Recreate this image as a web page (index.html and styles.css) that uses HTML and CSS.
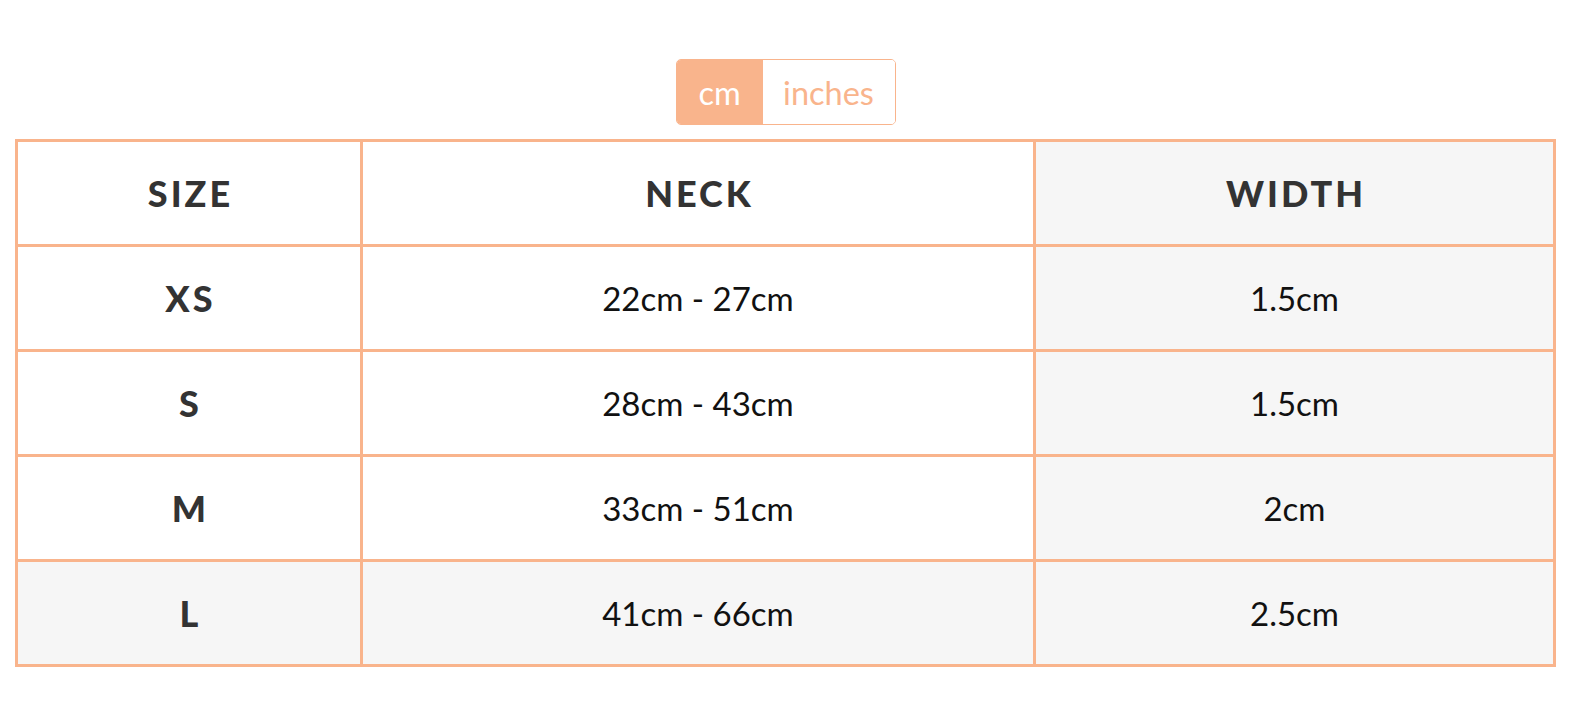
FILE: index.html
```html
<!DOCTYPE html>
<html lang="en">
<head>
<meta charset="utf-8">
<title>Size chart</title>
<link rel="stylesheet" href="styles.css">
</head>
<body>
<div class="page">
  <div class="toggle">
    <span class="seg seg-active">cm</span>
    <span class="seg">inches</span>
  </div>
  <div class="chart" role="table">
    <div class="cell head" role="columnheader">SIZE</div>
    <div class="cell head" role="columnheader">NECK</div>
    <div class="cell head shade" role="columnheader">WIDTH</div>

    <div class="cell size" role="cell">XS</div>
    <div class="cell" role="cell">22cm - 27cm</div>
    <div class="cell shade" role="cell">1.5cm</div>

    <div class="cell size" role="cell">S</div>
    <div class="cell" role="cell">28cm - 43cm</div>
    <div class="cell shade" role="cell">1.5cm</div>

    <div class="cell size" role="cell">M</div>
    <div class="cell" role="cell">33cm - 51cm</div>
    <div class="cell shade" role="cell">2cm</div>

    <div class="cell size shade" role="cell">L</div>
    <div class="cell shade" role="cell">41cm - 66cm</div>
    <div class="cell shade" role="cell">2.5cm</div>
  </div>
</div>
</body>
</html>
```

FILE: styles.css
```css
html, body {
  margin: 0;
  padding: 0;
  background: #ffffff;
}

body {
  font-family: Lato, "Open Sans", sans-serif;
  color: #111111;
}

.page {
  width: 1541px;
  padding: 59px 0 0 15px;
  display: flex;
  flex-direction: column;
  align-items: center;
}

.toggle {
  display: flex;
  height: 66px;
  box-sizing: border-box;
  border: 1.5px solid #f9b48c;
  border-radius: 5px;
  overflow: hidden;
  margin-bottom: 14px;
}

.seg {
  display: flex;
  align-items: center;
  justify-content: center;
  width: 132px;
  font-size: 32.5px;
  color: #f9b48c;
  background: #ffffff;
}

.seg-active {
  width: 86px;
  background: #f9b48c;
  color: #ffffff;
}

.chart {
  align-self: stretch;
  display: grid;
  grid-template-columns: 342px 670px 517px;
  grid-auto-rows: 102px;
  gap: 3px;
  padding: 3px;
  background: #f9b48c;
}

.cell {
  display: flex;
  align-items: center;
  justify-content: center;
  background: #ffffff;
  font-size: 33px;
  color: #111111;
}

.cell.shade {
  background: #f6f6f6;
}

.head,
.size {
  font-size: 36px;
  font-weight: 900;
  color: #333333;
  letter-spacing: 3px;
  padding-left: 3px;
}
```
